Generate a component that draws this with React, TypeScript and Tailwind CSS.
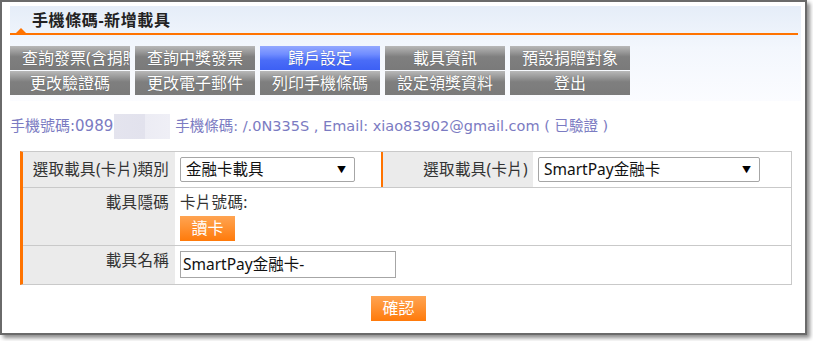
const CJK = '"Noto Sans", "Noto Sans CJK TC", sans-serif';

function NavButton({ label, active }: { label: string; active?: boolean }) {
  return (
    <div
      className={
        'h-[24px] w-[120px] overflow-hidden whitespace-nowrap text-center text-[16px] leading-[24px] text-white px-[12px] ' +
        (active
          ? 'bg-[linear-gradient(#93a8ff_0%,#6f8cff_35%,#4a6cf7_60%,#3d60f4_100%)]'
          : 'bg-[linear-gradient(#b8b8b8_0%,#999999_25%,#7f7f7f_45%,#7a7a7a_100%)]')
      }
      style={{ fontFamily: CJK, textShadow: '0 0 1px rgba(0,0,0,0.35)' }}
    >
      {label}
    </div>
  );
}

function OrangeButton({ label, className }: { label: string; className?: string }) {
  return (
    <div
      className={
        'h-[25px] w-[55px] text-center text-[16px] leading-[25px] text-white bg-[linear-gradient(#ffa452_0%,#ff9233_45%,#ff7a0a_100%)] ' +
        (className ?? '')
      }
      style={{ fontFamily: CJK }}
    >
      {label}
    </div>
  );
}

function SelectBox({ value, className }: { value: string; className: string }) {
  return (
    <div
      className={
        'h-[25px] flex items-center justify-between rounded-[2px] border border-[#a6a6a6] bg-white pl-[5px] pr-[8px] text-[15.5px] text-[#111] ' +
        className
      }
    >
      <span className="leading-none">{value}</span>
      <span className="text-[9px] text-black">▼</span>
    </div>
  );
}

export default function App() {
  const row1 = ['查詢發票(含捐贈)', '查詢中獎發票', '歸戶設定', '載具資訊', '預設捐贈對象'];
  const row2 = ['更改驗證碼', '更改電子郵件', '列印手機條碼', '設定領獎資料', '登出'];
  return (
    <div className="w-[813px] h-[341px] bg-white" style={{ fontFamily: CJK }}>
      <div className="w-[807px] h-[335px] border-2 border-[#6a6a6a] bg-white shadow-[3px_3px_4px_rgba(0,0,0,0.45)] flex flex-col">
        {/* header panel */}
        <div className="ml-[8px] mt-[4px] w-[791px] bg-[linear-gradient(#e5edf8_0%,#f3f7fd_45%,#fbfcff_100%)] pb-[6px]">
          <div className="h-[27px] pl-[22px] flex items-center">
            <span className="text-[16px] font-bold text-[#222] tracking-[0.6px] leading-none">
              手機條碼-新增載具
            </span>
          </div>
          <div className="relative w-[788px] h-[2px] bg-[#ff7300]">
            <div className="absolute left-[6px] bottom-[2px] w-0 h-0 border-l-[5px] border-r-[5px] border-b-[5px] border-l-transparent border-r-transparent border-b-[#ff7300]" />
          </div>
          <div className="mt-[11px] grid grid-cols-[repeat(5,120px)] gap-x-[5px] gap-y-[1px]">
            {row1.map((l) => (
              <NavButton key={l} label={l} active={l === '歸戶設定'} />
            ))}
            {row2.map((l) => (
              <NavButton key={l} label={l} />
            ))}
          </div>
        </div>
        {/* info line */}
        <div
          className="ml-[8px] mt-[13px] h-[25px] flex items-center text-[15px] text-[#7b7bc2] whitespace-nowrap"
          style={{ fontFamily: '"DejaVu Sans", "Noto Sans CJK TC", sans-serif' }}
        >
          <span>手機號碼:0989</span>
          <span className="ml-[1px] w-[56px] h-[25px] bg-[linear-gradient(90deg,#e4e4ee_0%,#e2e2ed_55%,#ececf4_56%,#efeff6_100%)]" />
          <span className="ml-[5px] text-[14.5px]">手機條碼: /.0N335S , Email: xiao83902@gmail.com ( 已驗證 )</span>
        </div>
        {/* table */}
        <div className="ml-[18px] mt-[12px] w-[772px] border-t border-r border-b border-[#c9c9c9] border-l-[3px] border-l-[#ff7300] text-[15.5px] text-[#333]">
          <div className="flex h-[36px] border-b border-[#c9c9c9]">
            <div className="w-[152px] bg-[#ebebeb] flex items-center justify-end pr-[6px] tracking-[0.3px]">選取載具(卡片)類別</div>
            <div className="w-[206px] flex items-center pl-[5px]">
              <SelectBox value="金融卡載具" className="w-[175px]" />
            </div>
            <div className="w-[152px] bg-[#ebebeb] border-l-[2px] border-[#ff7300] flex items-center justify-end pr-[5px] tracking-[0.3px]">選取載具(卡片)</div>
            <div className="flex-1 flex items-center pl-[5px]">
              <SelectBox value="SmartPay金融卡" className="w-[222px]" />
            </div>
          </div>
          <div className="flex h-[58px] border-b border-[#c9c9c9]">
            <div className="w-[152px] bg-[#ebebeb] flex justify-end pr-[6px] pt-[3px] tracking-[0.3px]">載具隱碼</div>
            <div className="flex-1 pl-[5px] pt-[3px]">
              <div className="leading-[22px] tracking-[0.3px]">卡片號碼:</div>
              <OrangeButton label="讀卡" className="mt-[3px]" />
            </div>
          </div>
          <div className="flex h-[38px]">
            <div className="w-[152px] bg-[#ebebeb] flex justify-end pr-[6px] pt-[3px] tracking-[0.3px]">載具名稱</div>
            <div className="flex-1 pl-[5px] pt-[5px]">
              <div className="w-[216px] h-[27px] border border-[#a6a6a6] bg-white flex items-center pl-[2px] text-[15.5px] text-[#111]">
                SmartPay金融卡-
              </div>
            </div>
          </div>
        </div>
        <div className="mt-[11px] ml-[369px]">
          <OrangeButton label="確認" />
        </div>
      </div>
    </div>
  );
}
